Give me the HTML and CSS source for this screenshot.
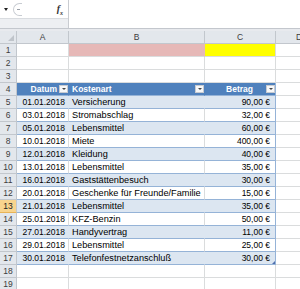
FILE: index.html
```html
<!DOCTYPE html>
<html lang="de">
<head>
    <meta charset="UTF-8">
    <title>Haushaltsbuch</title>
    <link rel="stylesheet" href="styles.css">
</head>
<body>
    <div class="fbar">
        <div class="namebox">
            <div class="nb-top">
                <span class="nb-arrow"></span>
                <span class="nb-grip"><span></span></span>
                <span class="fx">f<sub>x</sub></span>
            </div>
            <div class="nb-bottom"></div>
        </div>
        <div class="formula"></div>
    </div>
    <div class="fbar-gap"></div>

    <div class="sheet">
        <div class="row">
            <div class="c corner"><span class="corner-tri"></span></div>
            <div class="c ch">A</div>
            <div class="c ch">B</div>
            <div class="c ch">C</div>
            <div class="c ch chd">D</div>
        </div>
        <div class="row">
            <div class="c rh">1</div>
            <div class="c"></div>
            <div class="c pink"></div>
            <div class="c yellow"></div>
            <div class="c"></div>
        </div>
        <div class="row">
            <div class="c rh">2</div>
            <div class="c"></div><div class="c"></div><div class="c"></div><div class="c"></div>
        </div>
        <div class="row">
            <div class="c rh">3</div>
            <div class="c"></div><div class="c"></div><div class="c"></div><div class="c"></div>
        </div>
        <div class="row">
            <div class="c rh">4</div>
            <div class="c th th-right"><span>Datum</span><span class="flt"></span></div>
            <div class="c th th-split"><span>Kostenart</span><span class="flt"></span></div>
            <div class="c th th-right th-last"><span class="betrag">Betrag</span><span class="flt"></span></div>
            <div class="c"></div>
        </div>
        <div class="row band">
            <div class="c rh">5</div>
            <div class="c t num">01.01.2018</div><div class="c t">Versicherung</div><div class="c t num t-last">90,00 €</div><div class="c"></div>
        </div>
        <div class="row">
            <div class="c rh">6</div>
            <div class="c t num">03.01.2018</div><div class="c t">Stromabschlag</div><div class="c t num t-last">32,00 €</div><div class="c"></div>
        </div>
        <div class="row band">
            <div class="c rh">7</div>
            <div class="c t num">05.01.2018</div><div class="c t">Lebensmittel</div><div class="c t num t-last">60,00 €</div><div class="c"></div>
        </div>
        <div class="row">
            <div class="c rh">8</div>
            <div class="c t num">10.01.2018</div><div class="c t">Miete</div><div class="c t num t-last">400,00 €</div><div class="c"></div>
        </div>
        <div class="row band">
            <div class="c rh">9</div>
            <div class="c t num">12.01.2018</div><div class="c t">Kleidung</div><div class="c t num t-last">40,00 €</div><div class="c"></div>
        </div>
        <div class="row">
            <div class="c rh">10</div>
            <div class="c t num">13.01.2018</div><div class="c t">Lebensmittel</div><div class="c t num t-last">35,00 €</div><div class="c"></div>
        </div>
        <div class="row band">
            <div class="c rh">11</div>
            <div class="c t num">16.01.2018</div><div class="c t">Gaststättenbesuch</div><div class="c t num t-last">30,00 €</div><div class="c"></div>
        </div>
        <div class="row">
            <div class="c rh">12</div>
            <div class="c t num">20.01.2018</div><div class="c t">Geschenke für Freunde/Familie</div><div class="c t num t-last">15,00 €</div><div class="c"></div>
        </div>
        <div class="row band">
            <div class="c rh rh-active">13</div>
            <div class="c t num">21.01.2018</div><div class="c t">Lebensmittel</div><div class="c t num t-last">35,00 €</div><div class="c"></div>
        </div>
        <div class="row">
            <div class="c rh">14</div>
            <div class="c t num">25.01.2018</div><div class="c t">KFZ-Benzin</div><div class="c t num t-last">50,00 €</div><div class="c"></div>
        </div>
        <div class="row band">
            <div class="c rh">15</div>
            <div class="c t num">27.01.2018</div><div class="c t">Handyvertrag</div><div class="c t num t-last">11,00 €</div><div class="c"></div>
        </div>
        <div class="row">
            <div class="c rh">16</div>
            <div class="c t num">29.01.2018</div><div class="c t">Lebensmittel</div><div class="c t num t-last">25,00 €</div><div class="c"></div>
        </div>
        <div class="row band">
            <div class="c rh">17</div>
            <div class="c t num">30.01.2018</div><div class="c t">Telefonfestnetzanschluß</div><div class="c t num t-last t-end">30,00 €<span class="resize"></span></div><div class="c"></div>
        </div>
        <div class="row">
            <div class="c rh">18</div>
            <div class="c"></div><div class="c"></div><div class="c"></div><div class="c"></div>
        </div>
        <div class="row">
            <div class="c rh">19</div>
            <div class="c"></div><div class="c"></div><div class="c"></div><div class="c"></div>
        </div>
    </div>
</body>
</html>
```

FILE: styles.css
```css
/* Page */
body {
    margin: 0;
    width: 300px;
    height: 289px;
    overflow: hidden;
    background-color: #fff;
    font-family: 'Liberation Sans', Arial, sans-serif;
    font-size: 8.5px;
    color: #000;
}

/* Formula bar */
.fbar {
    display: flex;
    height: 29px;
    box-sizing: border-box;
    border-bottom: 1px solid #c3c7cd;
}

.namebox {
    width: 68px;
    border-right: 1px solid #c9ccd1;
    display: flex;
    flex-direction: column;
}

.nb-top {
    height: 18px;
    display: flex;
    align-items: center;
    border-bottom: 1px solid #d9dce0;
    background-color: #fff;
}

.nb-arrow {
    width: 0;
    height: 0;
    margin-left: 4px;
    border-left: 2.5px solid transparent;
    border-right: 2.5px solid transparent;
    border-top: 3px solid #222;
}

.nb-grip {
    width: 9px;
    height: 13px;
    margin-left: 5px;
    border: 1px solid #c8ccd2;
    border-right: none;
    border-radius: 7px 0 0 7px;
    box-sizing: border-box;
    display: flex;
    align-items: center;
    justify-content: center;
}

.nb-grip span {
    width: 3px;
    height: 1px;
    background-color: #9aa0a8;
}

.fx {
    margin-left: auto;
    margin-right: 5px;
    font-family: 'Liberation Serif', serif;
    font-style: italic;
    font-weight: bold;
    font-size: 10px;
    color: #333;
}

.fx sub {
    font-size: 6px;
}

.nb-bottom {
    flex: 1;
    background-color: #edeff2;
}

.formula {
    flex: 1;
    background-color: #fff;
}

.fbar-gap {
    height: 2px;
    background-color: #e8eaee;
}

/* Sheet grid */
.sheet {
    width: 300px;
    overflow: hidden;
}

.row {
    display: grid;
    grid-template-columns: 17px 52px 136px 71px 46px;
}

.c {
    height: 13px;
    box-sizing: border-box;
    border-right: 1px solid #dadcdd;
    border-bottom: 1px solid #dadcdd;
    padding: 0 3px;
    line-height: 12px;
    white-space: nowrap;
    overflow: hidden;
}

/* Headers */
.corner,
.ch,
.rh {
    background-color: #e3e7ec;
    border-right-color: #c2c7cd;
    border-bottom-color: #c2c7cd;
    color: #3c3c3c;
    text-align: center;
    padding: 0;
}

.corner {
    display: flex;
    justify-content: flex-end;
    align-items: flex-end;
    padding: 0 2px 2px 0;
}

.corner-tri {
    width: 0;
    height: 0;
    border-left: 6px solid transparent;
    border-bottom: 6px solid #bfc4ca;
}

.chd {
    text-align: left;
    padding-left: 20px;
}

.rh-active {
    background-color: #f8d48d;
    border-bottom-color: #e8b458;
    color: #222;
}

/* Colored cells */
.pink {
    background-color: #e6b8b7;
    border-right-color: #e6b8b7;
}

.yellow {
    background-color: #ffff00;
}

/* Table */
.th {
    background-color: #4f81bd;
    border-right-color: #4f81bd;
    border-bottom-color: #95b3d7;
    color: #fff;
    font-weight: bold;
    display: flex;
    align-items: center;
    padding: 0 0 0 3px;
}

.th-right {
    justify-content: flex-end;
}

.th-split {
    justify-content: space-between;
}

.th-last {
    border-right-color: #95b3d7;
}

.betrag {
    margin-right: 11px;
}

.flt {
    width: 9px;
    height: 8px;
    margin-left: 2px;
    box-sizing: border-box;
    border: 1px solid #c8cbd0;
    background-color: #f7f8f9;
    display: flex;
    align-items: center;
    justify-content: center;
}

.flt::after {
    content: "";
    width: 0;
    height: 0;
    border-left: 2px solid transparent;
    border-right: 2px solid transparent;
    border-top: 2.5px solid #444;
}

.t {
    font-size: 9.2px;
    border-bottom-color: #95b3d7;
}

.t-last {
    border-right-color: #95b3d7;
    padding-right: 5px;
}

.band .t {
    background-color: #dce6f1;
    border-right-color: #dce6f1;
}

.band .t-last {
    border-right-color: #95b3d7;
}

.num {
    font-size: 8.5px;
    text-align: right;
}

.t-end {
    position: relative;
}

.resize {
    position: absolute;
    right: 0;
    bottom: 0;
    width: 0;
    height: 0;
    border-left: 3px solid transparent;
    border-bottom: 3px solid #4f6fae;
}
```
